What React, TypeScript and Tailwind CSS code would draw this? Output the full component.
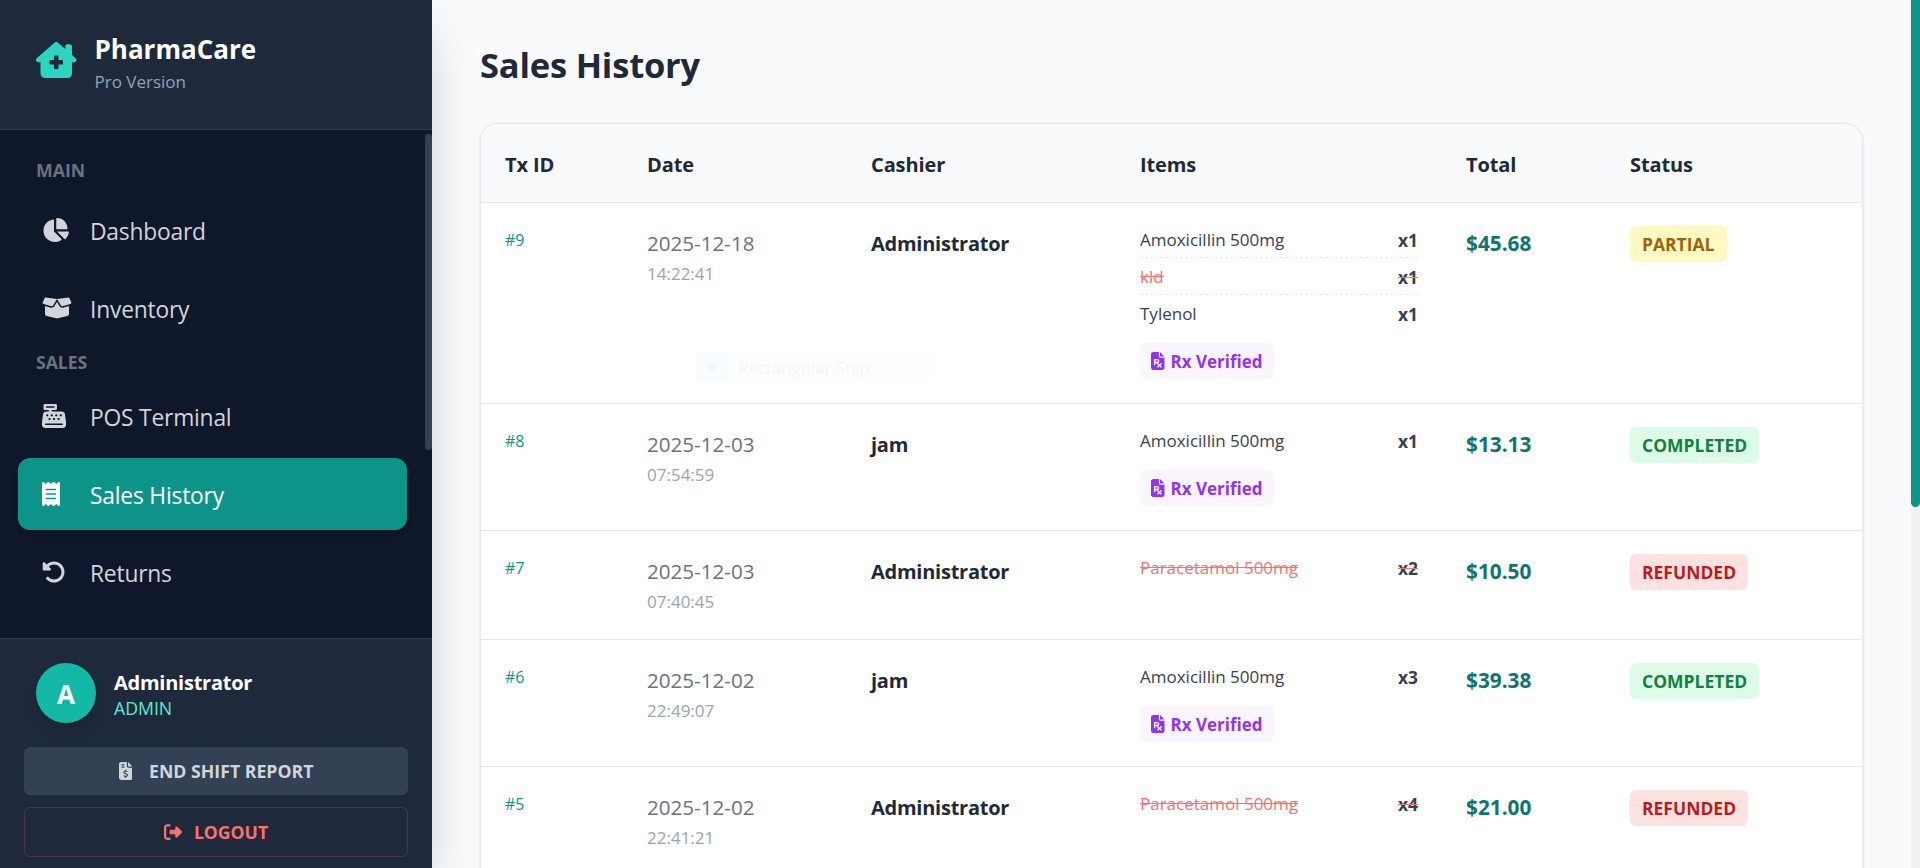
import type { ReactNode } from "react";
import {
  FaBoxOpen,
  FaCashRegister,
  FaChartPie,
  FaFileInvoiceDollar,
  FaFilePrescription,
  FaReceipt,
  FaRightFromBracket,
  FaRotateLeft,
} from "react-icons/fa6";

type Status = "PARTIAL" | "COMPLETED" | "REFUNDED";

interface Item {
  name: string;
  qty: number;
  refunded?: boolean;
}

interface Sale {
  id: number;
  date: string;
  time: string;
  cashier: string;
  items: Item[];
  rx?: boolean;
  total: string;
  status: Status;
}

const sales: Sale[] = [
  {
    id: 9,
    date: "2025-12-18",
    time: "14:22:41",
    cashier: "Administrator",
    items: [
      { name: "Amoxicillin 500mg", qty: 1 },
      { name: "kld", qty: 1, refunded: true },
      { name: "Tylenol", qty: 1 },
    ],
    rx: true,
    total: "$45.68",
    status: "PARTIAL",
  },
  { id: 8, date: "2025-12-03", time: "07:54:59", cashier: "jam", items: [{ name: "Amoxicillin 500mg", qty: 1 }], rx: true, total: "$13.13", status: "COMPLETED" },
  { id: 7, date: "2025-12-03", time: "07:40:45", cashier: "Administrator", items: [{ name: "Paracetamol 500mg", qty: 2, refunded: true }], total: "$10.50", status: "REFUNDED" },
  { id: 6, date: "2025-12-02", time: "22:49:07", cashier: "jam", items: [{ name: "Amoxicillin 500mg", qty: 3 }], rx: true, total: "$39.38", status: "COMPLETED" },
  { id: 5, date: "2025-12-02", time: "22:41:21", cashier: "Administrator", items: [{ name: "Paracetamol 500mg", qty: 4, refunded: true }], total: "$21.00", status: "REFUNDED" },
];

const statusStyle: Record<Status, string> = {
  PARTIAL: "bg-[#fef9c3] text-[#a16207]",
  COMPLETED: "bg-[#dcfce7] text-[#15803d]",
  REFUNDED: "bg-[#fee2e2] text-[#b91c1c]",
};

const columns = "grid grid-cols-[142px_224px_269px_326px_164px_1fr]";

function HouseMedicalIcon({ className }: { className: string }) {
  return (
    <svg viewBox="0 0 576 512" fill="currentColor" className={className}>
      <path d="M543.8 287.6c17 0 32-14 32-32.1c1-9-3-17-11-24L512 185V64c0-17.7-14.3-32-32-32H448c-17.7 0-32 14.3-32 32v36.7L309.5 7c-6-5-14-7-21-7s-15 1-22 8L10 231.5c-7 7-10 15-10 24c0 18 14 32.1 32 32.1h32V448c0 35.3 28.7 64 64 64H448.5c35.5 0 64.2-28.8 64-64.3l-.7-160.2h32zM256 208c0-8.8 7.2-16 16-16h32c8.8 0 16 7.2 16 16v48h48c8.8 0 16 7.2 16 16v32c0 8.8-7.2 16-16 16H320v48c0 8.8-7.2 16-16 16H272c-8.8 0-16-7.2-16-16V320H208c-8.8 0-16-7.2-16-16V272c0-8.8 7.2-16 16-16h48V208z" />
    </svg>
  );
}

function NavItem({ icon, label, active }: { icon: ReactNode; label: string; active?: boolean }) {
  return (
    <a
      className={
        "flex h-[72px] shrink-0 items-center rounded-xl pl-6 text-[22.8px] " +
        (active ? "bg-[#0d9488] text-white shadow-md" : "text-[#d1d5db]")
      }
    >
      <span className="mr-3 w-9">{icon}</span>
      <span className="pt-[5px] tracking-[-0.2px]">{label}</span>
    </a>
  );
}

function Sidebar() {
  return (
    <aside className="z-10 flex w-[432px] shrink-0 flex-col bg-[#0f172a] shadow-2xl">
      <div className="flex h-[130px] shrink-0 items-start border-b border-[#334155] bg-[#1e293b] pl-9">
        <HouseMedicalIcon className="mt-[42px] h-9 w-auto text-[#2dd4bf]" />
        <div className="ml-[18px] pt-[31px]">
          <h1 className="text-[26px] leading-9 font-bold text-white">PharmaCare</h1>
          <p className="mt-[3px] text-[17px] leading-6 text-[#94a3b8]">Pro Version</p>
        </div>
      </div>

      <div className="flex min-h-0 flex-1 justify-between overflow-hidden pl-[18px]">
        <nav className="flex w-[389px] flex-col pt-7">
          <p className="pl-[18px] text-[17.7px] leading-6 font-bold text-[#6b7280]">MAIN</p>
          <div className="mt-3 flex flex-col gap-1.5">
            <NavItem icon={<FaChartPie viewBox="0 0 576 512" className="h-6 w-[27px]" />} label="Dashboard" />
            <NavItem icon={<FaBoxOpen viewBox="0 0 640 512" className="h-6 w-[30px]" />} label="Inventory" />
          </div>
          <p className="mt-1.5 pl-[18px] text-[17.6px] leading-6 font-bold text-[#6b7280]">SALES</p>
          <div className="mt-1.5 flex flex-col gap-1.5">
            <NavItem icon={<FaCashRegister viewBox="0 0 512 512" className="size-6" />} label="POS Terminal" />
            <NavItem icon={<FaReceipt viewBox="0 0 384 512" className="h-6 w-[18px]" />} label="Sales History" active />
            <NavItem icon={<FaRotateLeft viewBox="0 0 512 512" className="size-6" />} label="Returns" />
          </div>
        </nav>
        <div className="mt-1 h-[316px] w-[7px] rounded-[3px] bg-[#334155]" />
      </div>

      <div className="h-[230px] shrink-0 border-t border-[#334155] bg-[#1e293b] px-6 pt-6">
        <div className="flex items-center px-3">
          <div className="flex size-[60px] items-center justify-center rounded-full bg-[#14b8a6] pt-0.5 text-[26px] font-bold text-white shadow-lg">
            A
          </div>
          <div className="ml-[18px] pt-1">
            <p className="text-xl leading-[26px] font-bold tracking-[-0.25px] text-white">Administrator</p>
            <p className="text-[17.7px] leading-[25px] text-[#5eead4]">ADMIN</p>
          </div>
        </div>
        <button className="mt-6 flex h-12 w-full items-center justify-center rounded-md bg-[#334155] text-[17.7px] font-bold text-[#d1d5db]">
          <FaFileInvoiceDollar viewBox="0 0 384 512" className="mr-[17px] h-[18px] w-[13.5px]" />
          <span>END SHIFT REPORT</span>
        </button>
        <button className="mt-3 flex h-[50px] w-full items-center justify-center rounded-md border border-[#54334a] text-[17.6px] font-bold text-[#f87171]">
          <FaRightFromBracket viewBox="0 0 512 512" className="mr-3 size-[18px]" />
          <span>LOGOUT</span>
        </button>
      </div>
    </aside>
  );
}

function SaleRow({ sale }: { sale: Sale }) {
  return (
    <div className={columns + " border-b border-[#e5e7eb]"}>
      <div className="px-6 pt-[25px] text-base leading-6 text-[#0d9488]">#{sale.id}</div>
      <div className="px-6 py-6">
        <p className="text-[20.6px] leading-8 text-[#6b7280]">{sale.date}</p>
        <p className="mt-px text-[17px] leading-[27px] text-[#9ca3af]">{sale.time}</p>
      </div>
      <div className="px-6 pt-[25px] text-xl leading-8 font-bold tracking-[-0.25px] text-[#1f2937]">{sale.cashier}</div>
      <div className="px-6 py-6">
        <ul className="flex flex-col gap-[5px]">
          {sale.items.map((item, i) => (
            <li
              key={item.name}
              className={
                "flex justify-between pt-px text-[17px] leading-6 " +
                (i < sale.items.length - 1 ? "mb-px border-b border-dashed border-[#e5e7eb] pb-[5px] " : "") +
                (item.refunded ? "text-[#f87171] line-through" : "text-[#374151]")
              }
            >
              <span>{item.name}</span>
              <span className="text-[17.4px] font-bold text-[#374151]">x{item.qty}</span>
            </li>
          ))}
        </ul>
        {sale.rx && (
          <div className="mt-[17px] flex h-9 w-[134px] items-center rounded-md bg-[#faf5ff] pl-[11px] text-[17px] font-bold text-[#9333ea]">
            <FaFilePrescription viewBox="0 0 384 512" className="mr-1.5 h-[18px] w-[13.5px] shrink-0" />
            <span className="pt-px whitespace-nowrap">Rx Verified</span>
          </div>
        )}
      </div>
      <div className="px-6 pt-6 text-[20.8px] leading-8 font-bold text-[#0f766e]">{sale.total}</div>
      <div className="px-6 py-[23px]">
        <span className={"inline-flex h-9 items-center rounded-md px-3 pt-px text-[17.5px] font-bold " + statusStyle[sale.status]}>
          {sale.status}
        </span>
      </div>
    </div>
  );
}

export default function App() {
  return (
    <div className="flex h-[868px] w-full overflow-hidden bg-[#f8fafc] font-['Open_Sans',sans-serif]">
      <Sidebar />
      <main className="relative min-w-0 flex-1 pt-[35px] pl-12">
        <h2 className="text-[34.5px] leading-[60px] font-bold tracking-[-0.2px] text-[#1f2937]">Sales History</h2>
        <section className="mt-7 w-[1383px] overflow-hidden rounded-[18px] border border-[#e5e7eb] bg-white pb-24 shadow-sm">
          <div className={columns + " h-[79px] items-center border-b border-[#e5e7eb] bg-[#f8fafc] pt-[3px] text-xl font-bold tracking-[-0.1px] text-[#1f2937]"}>
            {["Tx ID", "Date", "Cashier", "Items", "Total", "Status"].map((label) => (
              <span key={label} className="px-6">
                {label}
              </span>
            ))}
          </div>
          {sales.map((sale) => (
            <SaleRow key={sale.id} sale={sale} />
          ))}
        </section>
        <div className="absolute top-[352px] left-[264px] flex h-[30px] w-[236px] items-center bg-[#fbfdff] text-[17px] text-[#f3f5f7]">
          <span className="flex h-full w-8 items-center justify-center bg-[#f8fcff]">
            <span className="size-2 rounded-full bg-[#eef4f8]" />
          </span>
          <span className="ml-2.5 pt-0.5 tracking-[-0.1px]">Rectangular Snip</span>
        </div>
      </main>
      <div className="w-[9px] shrink-0 bg-[#f1f1f1]">
        <div className="h-[507px] rounded-b-[5px] bg-[#0d9488]" />
      </div>
    </div>
  );
}
